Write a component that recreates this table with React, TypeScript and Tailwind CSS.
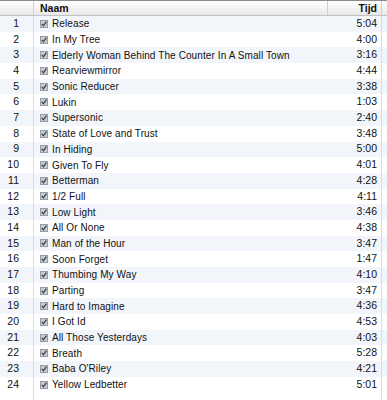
import React from "react";

const tracks: [string, string][] = [
  ["Release", "5:04"],
  ["In My Tree", "4:00"],
  ["Elderly Woman Behind The Counter In A Small Town", "3:16"],
  ["Rearviewmirror", "4:44"],
  ["Sonic Reducer", "3:38"],
  ["Lukin", "1:03"],
  ["Supersonic", "2:40"],
  ["State of Love and Trust", "3:48"],
  ["In Hiding", "5:00"],
  ["Given To Fly", "4:01"],
  ["Betterman", "4:28"],
  ["1/2 Full", "4:11"],
  ["Low Light", "3:46"],
  ["All Or None", "4:38"],
  ["Man of the Hour", "3:47"],
  ["Soon Forget", "1:47"],
  ["Thumbing My Way", "4:10"],
  ["Parting", "3:47"],
  ["Hard to Imagine", "4:36"],
  ["I Got Id", "4:53"],
  ["All Those Yesterdays", "4:03"],
  ["Breath", "5:28"],
  ["Baba O'Riley", "4:21"],
  ["Yellow Ledbetter", "5:01"],
];

function Check() {
  return (
    <svg width="8" height="8" viewBox="0 0 8 8" className="shrink-0">
      <rect x="0.5" y="0.5" width="7" height="7" fill="#c7ccd3" stroke="#979ca4" />
      <path d="M1.8 3.9 L3.4 5.8 L6.4 1.6" fill="none" stroke="#3a4048" strokeWidth="1.3" />
    </svg>
  );
}

export default function App() {
  return (
    <div
      className="w-[387px] h-[400px] bg-white overflow-hidden text-[10.5px] text-[#111]"
      style={{ fontFamily: '"Liberation Sans", Arial, sans-serif' }}
    >
      <div className="flex h-[16px] border-t border-[#8c8c8c] border-b border-b-[#c2c2c2] bg-gradient-to-b from-white to-[#e9e9e9] font-bold">
        <div className="w-[34px] border-r border-[#cfcfcf]" />
        <div className="w-[294px] border-r border-[#cfcfcf] pl-[6px] leading-[14px]">Naam</div>
        <div className="w-[54px] border-r border-[#cfcfcf] text-right pr-[4px] leading-[14px]">Tijd</div>
        <div className="flex-1" />
      </div>
      <div className="flex flex-col">
        {tracks.map(([name, time], i) => (
          <div
            key={i}
            className={`flex h-[15.7px] items-center ${i % 2 === 0 ? "bg-[#f2f5fa]" : "bg-white"}`}
          >
            <div className="w-[34px] h-full border-r border-[#dcdcdc] text-right pr-[14px] flex items-center justify-end">
              {i + 1}
            </div>
            <div className="w-[294px] flex items-center gap-[4px] pl-[6px]">
              <Check />
              <span className="whitespace-nowrap text-[10px] tracking-[0.1px]">{name}</span>
            </div>
            <div className="w-[54px] h-full border-r border-[#dcdcdc] text-right pr-[4px] flex items-center justify-end">
              {time}
            </div>
            <div className="flex-1" />
          </div>
        ))}
        <div className="flex h-[20px]">
          <div className="w-[34px] h-full border-r border-[#dcdcdc]" />
          <div className="w-[294px]" />
          <div className="w-[54px] h-full border-r border-[#dcdcdc]" />
        </div>
      </div>
    </div>
  );
}
